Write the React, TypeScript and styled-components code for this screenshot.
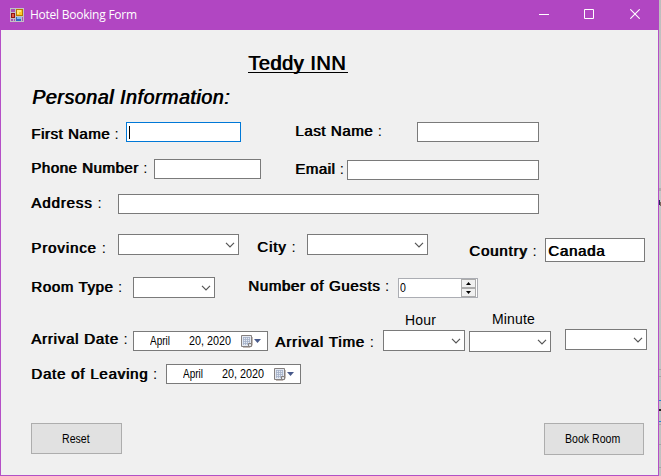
import React from "react";
import styled, { createGlobalStyle, css } from "styled-components";

const GlobalStyle = createGlobalStyle`
  *, *::before, *::after { box-sizing: border-box; }
  html, body { margin: 0; padding: 0; }
  body {
    background: #c4c4c4;
    font-family: "Liberation Sans", Arial, sans-serif;
    color: #000;
    overflow: hidden;
  }
`;

/* Double-struck bold: every glyph is drawn twice, one pixel apart. */
const doubleStrike = css`
  font-weight: normal;
  text-shadow: 0.8px 0 0 #000;
`;

const Desktop = styled.div`
  display: flex;
  width: 661px;
  height: 476px;
  background: linear-gradient(#bdbdbd, #cacaca 25%, #c0c0c0);
`;

const Backdrop = styled.svg`
  flex: none;
  width: 2px;
  height: 476px;
`;

const Window = styled.div`
  flex: none;
  display: flex;
  flex-direction: column;
  width: 659px;
  height: 476px;
  border: 1px solid #b44fc6;
  border-top: 0;
  background: #f0f0f0;
`;

const TitleBar = styled.header`
  flex: none;
  display: flex;
  align-items: center;
  height: 30px;
  margin: 0 -1px;
  padding: 0 1px 0 10px;
  background: #b146c2;
  color: #fff;
`;

const Caption = styled.span`
  flex: 1;
  margin-left: 6px;
  font: 12px/16px "Open Sans", "Segoe UI", sans-serif;
  letter-spacing: -0.24px;
`;

const CaptionButton = styled.div<{ $nudge?: number }>`
  display: flex;
  align-items: center;
  justify-content: center;
  width: 46px;
  height: 30px;
  padding-left: ${(p) => p.$nudge ?? 0}px;
  svg { display: block; margin-top: -2px; }
`;

const FormHeading = styled.h1`
  flex: none;
  height: 52px;
  margin: 0;
  padding: 21px 0 0 247px;
  ${doubleStrike}
  font-size: 20px;
  letter-spacing: 0.5px;
  line-height: 24px;
`;

const HeadingText = styled.span`
  display: inline-block;
  width: 100px;
  height: 22px;
  border-bottom: 1px solid #000;
  white-space: nowrap;
`;

const SectionHeading = styled.h2`
  flex: none;
  height: 38px;
  margin: 0;
  padding: 3px 0 0 31px;
  ${doubleStrike}
  font-size: 19.5px;
  font-style: italic;
  letter-spacing: 0.6px;
  line-height: 24px;
`;

const Row = styled.div<{ $h: number; $indent?: number }>`
  flex: none;
  display: flex;
  align-items: flex-start;
  height: ${(p) => p.$h}px;
  padding-left: ${(p) => p.$indent ?? 30}px;
`;

const LabelText = styled.label<{ $w: number; $top: number; $track: number }>`
  flex: none;
  width: ${(p) => p.$w}px;
  margin-top: ${(p) => p.$top}px;
  ${doubleStrike}
  font-size: 15px;
  line-height: 20px;
  letter-spacing: ${(p) => p.$track}px;
  white-space: pre;
`;

const Colon = styled.span`
  text-shadow: none;
`;

const Field = styled.div<{ $w: number; $top: number; $h?: number; $gap?: number; $active?: boolean }>`
  flex: none;
  display: flex;
  align-items: center;
  width: ${(p) => p.$w}px;
  height: ${(p) => p.$h ?? 20}px;
  margin-top: ${(p) => p.$top}px;
  margin-right: ${(p) => p.$gap ?? 0}px;
  border: 1px solid ${(p) => (p.$active ? "#0078d7" : "#7a7a7a")};
  background: #fff;
`;

const Caret = styled.i`
  width: 1px;
  height: 13px;
  margin-left: 2px;
  background: #000;
`;

const CountryValue = styled.span`
  padding: 2px 0 0 2px;
  ${doubleStrike}
  font-size: 15px;
  line-height: 20px;
  letter-spacing: 0.75px;
`;

const ComboField = styled(Field)`
  justify-content: flex-end;
  padding-right: 3px;
`;

const DateField = styled(Field)`
  padding-left: 16px;
`;

const SmallText = styled.span<{ $w?: number; $scale?: number }>`
  display: block;
  width: ${(p) => (p.$w ? `${p.$w}px` : "auto")};
  font-size: 12px;
  line-height: 14px;
  white-space: nowrap;
  transform: scaleX(${(p) => p.$scale ?? 0.88});
  transform-origin: left center;
`;

const Spinner = styled(Field)`
  border-color: #abadb3;
  padding-left: 1px;
  justify-content: space-between;
`;

const SpinButtons = styled.div`
  display: flex;
  flex-direction: column;
  width: 15px;
  height: 18px;
  margin-right: 1px;
`;

const SpinButton = styled.div`
  flex: 1;
  display: flex;
  align-items: center;
  justify-content: center;
  border: 1px solid #acacac;
  background: #f0f0f0;
`;

const UnitLabel = styled.span<{ $w: number; $top: number }>`
  width: ${(p) => p.$w}px;
  margin-top: ${(p) => p.$top}px;
  font-size: 14px;
  line-height: 16px;
  letter-spacing: 0.15px;
`;

const Footer = styled.footer`
  display: flex;
  align-items: flex-start;
  justify-content: space-between;
  padding: 3px 14px 0 30px;
`;

const PushButton = styled.button<{ $w: number; $h: number; $pad: number }>`
  display: flex;
  align-items: center;
  width: ${(p) => p.$w}px;
  height: ${(p) => p.$h}px;
  padding: 0 0 0 ${(p) => p.$pad}px;
  border: 1px solid #adadad;
  background: #e1e1e1;
  color: #000;
  font-family: inherit;
`;

function Label({ text, w, top, track }: { text: string; w: number; top: number; track: number }) {
  return (
    <LabelText $w={w} $top={top} $track={track}>
      {text} <Colon>:</Colon>
    </LabelText>
  );
}

function Combo({ w, top, gap }: { w: number; top: number; gap?: number }) {
  return (
    <ComboField $w={w} $top={top} $h={21} $gap={gap}>
      <svg width="10" height="6" viewBox="0 0 10 6">
        <path d="M1 0.8L5 4.8L9 0.8" fill="none" stroke="#555" strokeWidth="1.2" />
      </svg>
    </ComboField>
  );
}

function DatePicker({ top, gap }: { top: number; gap?: number }) {
  return (
    <DateField $w={135} $top={top} $gap={gap}>
      <SmallText $w={39} $scale={0.83}>April</SmallText>
      <SmallText $w={52} $scale={0.9}>20, 2020</SmallText>
      <svg width="20" height="13" viewBox="0 0 20 13">
        <path d="M2 12.5H9L11.5 10V2" fill="none" stroke="#c4bcb8" />
        <path d="M0.5 0.5H10.5V11.5H0.5Z" fill="#e4e9f2" stroke="#85807f" />
        <path d="M2 2.5H9M2 4.5H9M2 6.5H9M2 8.5H8M2.5 2V10M4.5 2V10M6.5 2V10M8.5 2V8" stroke="#a3b0c6" strokeWidth="0.8" />
        <path d="M10.5 8.5H7.5V11.5" fill="#ddd" stroke="#85807f" />
        <path d="M13 4H20L16.5 8Z" fill="#47598a" />
      </svg>
    </DateField>
  );
}

function AppIcon() {
  return (
    <svg width="14" height="14" viewBox="0 0 14 14" shapeRendering="crispEdges">
      <path d="M0 0H14V14H0Z" fill="#c3bfc6" />
      <path d="M1 1H5V4H1ZM1 11H3V13H1ZM4 11H5V13H4ZM12 9H13V13H12Z" fill="#a653b5" />
      <path d="M6 1H13V8H6Z" fill="#b57a00" />
      <path d="M7 2H12V7H7Z" fill="#ffc928" />
      <path d="M7 2H11V4H9V6H7Z" fill="#ffe57c" />
      <path d="M1 5H5V10H1Z" fill="#8f1414" />
      <path d="M2 6H4V9H2Z" fill="#e35b45" />
      <path d="M6 9H11V13H6Z" fill="#3268bd" />
      <path d="M7 9H11V11H7Z" fill="#85b9f2" />
    </svg>
  );
}

export default function App() {
  return (
    <Desktop>
      <GlobalStyle />
      <Window>
        <TitleBar>
          <AppIcon />
          <Caption>Hotel Booking Form</Caption>
          <CaptionButton $nudge={2}>
            <svg width="10" height="10"><path d="M0 5.5H10" stroke="#fff" /></svg>
          </CaptionButton>
          <CaptionButton>
            <svg width="10" height="10"><path d="M0.5 0.5H9.5V9.5H0.5Z" fill="none" stroke="#fff" /></svg>
          </CaptionButton>
          <CaptionButton>
            <svg width="10" height="10"><path d="M0.3 0.3L9.7 9.7M9.7 0.3L0.3 9.7" stroke="#fff" strokeWidth="1.1" /></svg>
          </CaptionButton>
        </TitleBar>

        <FormHeading><HeadingText>Teddy INN</HeadingText></FormHeading>
        <SectionHeading>Personal Information:</SectionHeading>

        <Row $h={36}>
          <Label text="First Name" w={95} top={4} track={0.55} />
          <Field $w={115} $top={2} $gap={54} $active><Caret /></Field>
          <Label text="Last Name" w={122} top={1} track={0.6} />
          <Field $w={122} $top={2} />
        </Row>

        <Row $h={36}>
          <Label text="Phone Number" w={123} top={2} track={0.55} />
          <Field $w={107} $top={3} $gap={34} />
          <Label text="Email" w={52} top={3} track={0.5} />
          <Field $w={192} $top={4} />
        </Row>

        <Row $h={38}>
          <Label text="Address" w={87} top={1} track={0.9} />
          <Field $w={421} $top={2} />
        </Row>

        <Row $h={45}>
          <Label text="Province" w={87} top={8} track={0.9} />
          <Combo w={121} top={4} gap={18} />
          <Label text="City" w={50} top={7} track={0.9} />
          <Combo w={121} top={4} gap={41} />
          <Label text="Country" w={76} top={11} track={0.85} />
          <Field $w={100} $top={8} $h={24}><CountryValue>Canada</CountryValue></Field>
        </Row>

        <Row $h={35}>
          <Label text="Room Type" w={102} top={2} track={0.65} />
          <Combo w={82} top={2} gap={33} />
          <Label text="Number of Guests" w={150} top={1} track={0.65} />
          <Spinner $w={80} $top={3}>
            <SmallText>0</SmallText>
            <SpinButtons>
              <SpinButton><svg width="5" height="3"><path d="M0 3L2.5 0L5 3Z" /></svg></SpinButton>
              <SpinButton><svg width="5" height="3"><path d="M0 0H5L2.5 3Z" /></svg></SpinButton>
            </SpinButtons>
          </Spinner>
        </Row>

        <Row $h={18} $indent={404}>
          <UnitLabel $w={87} $top={2}>Hour</UnitLabel>
          <UnitLabel $w={60} $top={1}>Minute</UnitLabel>
        </Row>

        <Row $h={34}>
          <Label text="Arrival Date" w={102} top={1} track={0.77} />
          <DatePicker top={3} gap={7} />
          <Label text="Arrival Time" w={108} top={4} track={0.88} />
          <Combo w={82} top={2} gap={4} />
          <Combo w={82} top={3} gap={14} />
          <Combo w={82} top={1} />
        </Row>

        <Row $h={58}>
          <Label text="Date of Leaving" w={135} top={2} track={0.8} />
          <DatePicker top={2} />
        </Row>

        <Footer>
          <PushButton $w={91} $h={31} $pad={30}><SmallText>Reset</SmallText></PushButton>
          <PushButton $w={100} $h={32} $pad={20}><SmallText>Book Room</SmallText></PushButton>
        </Footer>
      </Window>

      <Backdrop viewBox="0 0 2 476" shapeRendering="crispEdges">
        <path d="M0 188H2V191H0Z" fill="#adadad" />
        <path d="M0 200H1V205H0Z" fill="#222e58" />
        <path d="M1 202H2V206H1Z" fill="#79655c" />
        <path d="M0 369H2V370H0ZM0 376H2V377H0ZM0 424H2V425H0ZM0 444H2V445H0ZM0 467H2V468H0Z" fill="#a5a5a5" />
        <path d="M0 400H2V401H0ZM0 421H2V422H0Z" fill="#2683d1" />
        <path d="M0 409H2V411H0Z" fill="#222" />
      </Backdrop>
    </Desktop>
  );
}
